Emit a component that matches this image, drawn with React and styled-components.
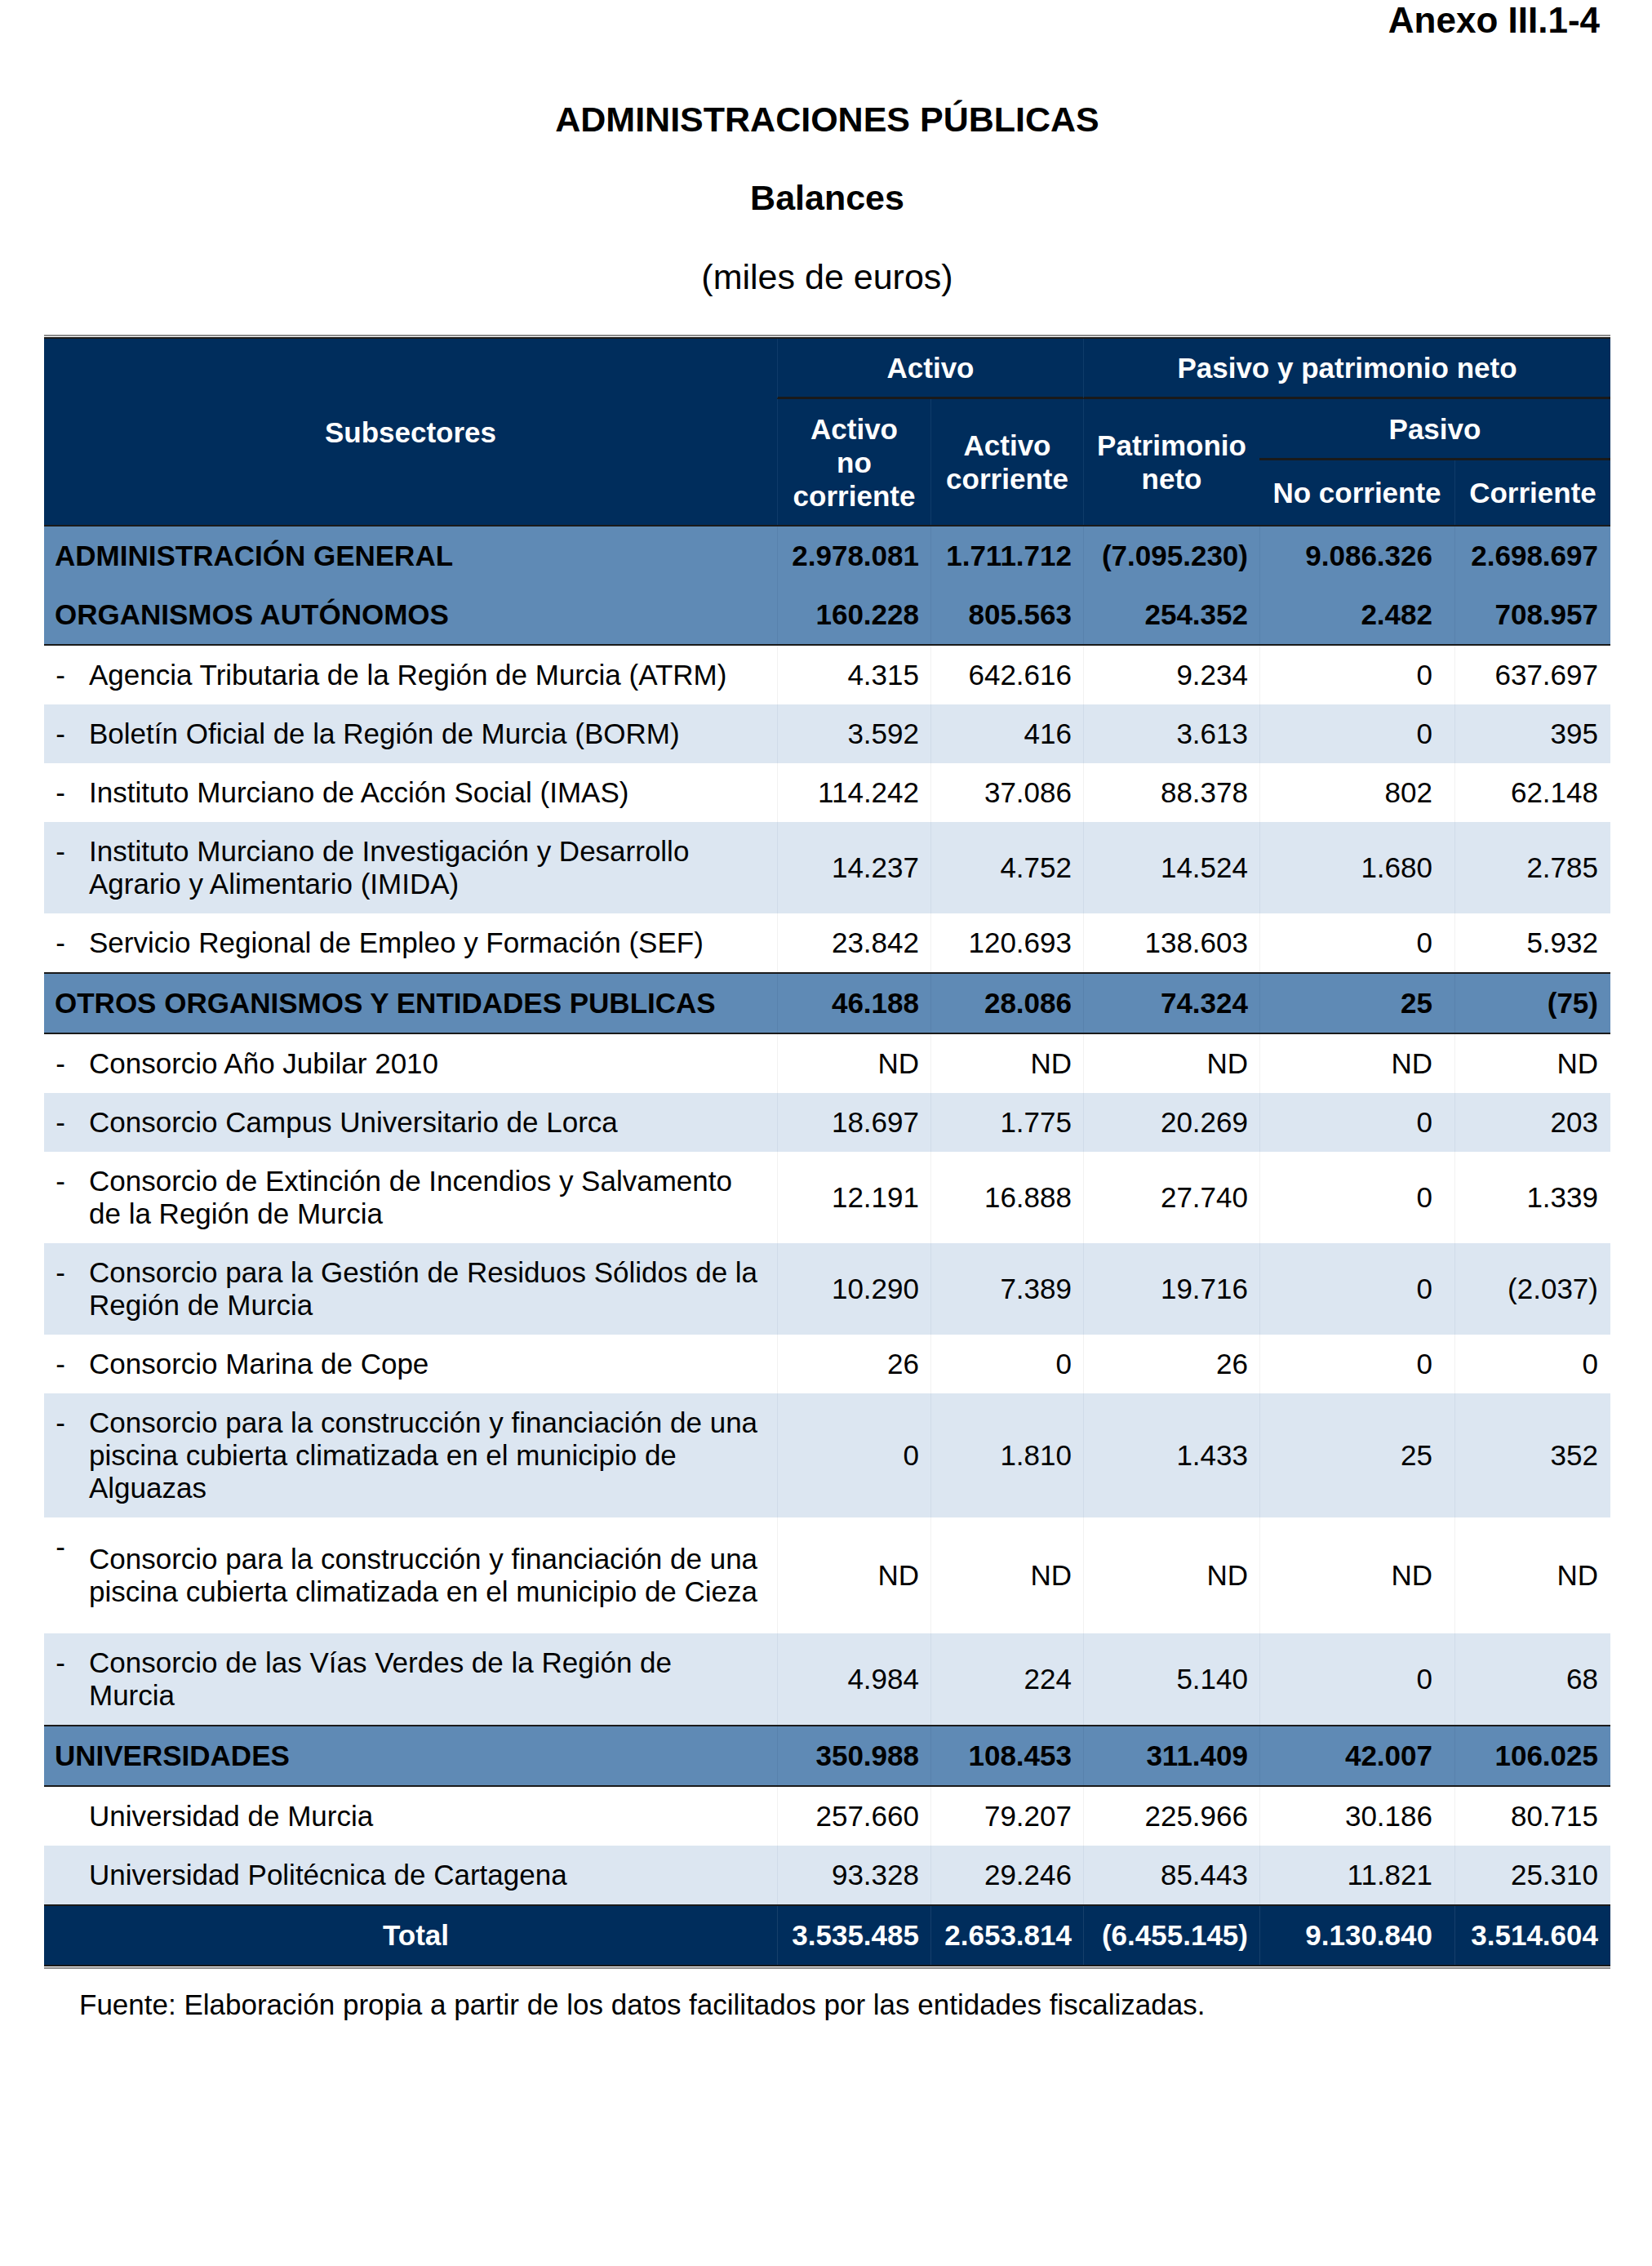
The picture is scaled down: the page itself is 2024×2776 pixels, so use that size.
import React from 'react';
import styled, { createGlobalStyle, css } from 'styled-components';

const GlobalStyle = createGlobalStyle`
  html, body {
    margin: 0;
    padding: 0;
    background: #fff;
  }
  body {
    font-family: "Liberation Sans", Arial, sans-serif;
    color: #000;
  }
`;

// Colores de la tabla
const NAVY = '#002d5c';
const STEEL = '#5f8ab5';
const LIGHT = '#dce6f1';
const RULE = '#1a1a1a';
const COLS = '898px 188px 187px 216px 239px 191px';

const Page = styled.div`
  width: 2024px;
  min-height: 2776px;
  box-sizing: border-box;
  padding: 0 51px 0 54px;
`;

const Annex = styled.div`
  margin-top: 3px;
  padding-right: 13px;
  text-align: right;
  font-size: 44px;
  line-height: 1;
  font-weight: bold;
`;

const Heading = styled.div`
  margin-top: ${p => p.gap}px;
  text-align: center;
  font-size: 43px;
  line-height: 1;
  font-weight: ${p => (p.light ? 'normal' : 'bold')};
`;

const DoubleRule = styled.div`
  height: 1px;
  border-top: 2px solid ${p => (p.flip ? RULE : '#8c8c8c')};
  border-bottom: 2px solid ${p => (p.flip ? '#8c8c8c' : RULE)};
  margin-top: ${p => p.gap || 0}px;
`;

const Head = styled.div`
  display: grid;
  grid-template-columns: ${COLS};
  grid-template-rows: 74px 75px 79px;
  background: ${NAVY};
  border-bottom: 2px solid ${RULE};
`;

const HeadCell = styled.div`
  grid-area: ${p => p.area};
  display: flex;
  align-items: center;
  justify-content: center;
  text-align: center;
  box-sizing: border-box;
  color: #fff;
  font-size: 35px;
  font-weight: bold;
  line-height: 41px;
  ${p => p.sep && css`border-left: 1px solid #0f3b69;`}
  ${p => p.under && css`border-bottom: 3px solid ${RULE};`}
`;

const rowBg = {
  white: '#fff',
  light: LIGHT,
  section: STEEL,
  total: NAVY,
};

const sepColor = {
  white: '#f2f2f2',
  light: '#d0dbe8',
  section: '#5882ad',
  total: '#163f6b',
};

const Row = styled.div`
  display: grid;
  grid-template-columns: ${COLS};
  min-height: ${p => p.minH || 0}px;
  background: ${p => rowBg[p.kind]};
  color: ${p => (p.kind === 'total' ? '#fff' : '#000')};
  font-weight: ${p => (p.kind === 'section' || p.kind === 'total' ? 'bold' : 'normal')};
  font-size: 35px;
  line-height: 40px;
  ${p => p.top && css`border-top: 2px solid ${RULE};`}
  ${p => p.bottom && css`border-bottom: 2px solid ${RULE};`}
`;

const NameCell = styled.div`
  display: flex;
  padding: 16px 0;
  justify-content: ${p => (p.center ? 'center' : 'flex-start')};
`;

const Dash = styled.span`
  flex: 0 0 40px;
  align-self: flex-start;
  text-align: center;
`;

const Label = styled.span`
  align-self: center;
  white-space: pre-line;
  padding-left: ${p => (p.bare ? 13 : 15)}px;
`;

const Num = styled.div`
  display: flex;
  align-items: center;
  justify-content: flex-end;
  padding: 16px ${p => p.pr}px 16px 0;
  border-left: 1px solid ${p => sepColor[p.kind]};
  white-space: nowrap;
`;

const Footer = styled.div`
  margin-top: 24px;
  padding-left: 43px;
  font-size: 35px;
  line-height: 40px;
`;

const PAD = [14, 14, 14, 27, 15];

const rows = [
  { kind: 'section', name: 'ADMINISTRACIÓN GENERAL', v: ['2.978.081', '1.711.712', '(7.095.230)', '9.086.326', '2.698.697'] },
  { kind: 'section', name: 'ORGANISMOS AUTÓNOMOS', bottom: true, v: ['160.228', '805.563', '254.352', '2.482', '708.957'] },
  { kind: 'white', dash: true, name: 'Agencia Tributaria de la Región de Murcia (ATRM)', v: ['4.315', '642.616', '9.234', '0', '637.697'] },
  { kind: 'light', dash: true, name: 'Boletín Oficial de la Región de Murcia (BORM)', v: ['3.592', '416', '3.613', '0', '395'] },
  { kind: 'white', dash: true, name: 'Instituto Murciano de Acción Social (IMAS)', v: ['114.242', '37.086', '88.378', '802', '62.148'] },
  { kind: 'light', dash: true, name: 'Instituto Murciano de Investigación y Desarrollo\nAgrario y Alimentario (IMIDA)', v: ['14.237', '4.752', '14.524', '1.680', '2.785'] },
  { kind: 'white', dash: true, name: 'Servicio Regional de Empleo y Formación (SEF)', v: ['23.842', '120.693', '138.603', '0', '5.932'] },
  { kind: 'section', name: 'OTROS ORGANISMOS Y ENTIDADES PUBLICAS', top: true, bottom: true, v: ['46.188', '28.086', '74.324', '25', '(75)'] },
  { kind: 'white', dash: true, name: 'Consorcio Año Jubilar 2010', v: ['ND', 'ND', 'ND', 'ND', 'ND'] },
  { kind: 'light', dash: true, name: 'Consorcio Campus Universitario de Lorca', v: ['18.697', '1.775', '20.269', '0', '203'] },
  { kind: 'white', dash: true, name: 'Consorcio de Extinción de Incendios y Salvamento\nde la Región de Murcia', v: ['12.191', '16.888', '27.740', '0', '1.339'] },
  { kind: 'light', dash: true, name: 'Consorcio para la Gestión de Residuos Sólidos de la\nRegión de Murcia', v: ['10.290', '7.389', '19.716', '0', '(2.037)'] },
  { kind: 'white', dash: true, name: 'Consorcio Marina de Cope', v: ['26', '0', '26', '0', '0'] },
  { kind: 'light', dash: true, name: 'Consorcio para la construcción y financiación de una\npiscina cubierta climatizada en el municipio de\nAlguazas', v: ['0', '1.810', '1.433', '25', '352'] },
  { kind: 'white', dash: true, minH: 142, name: 'Consorcio para la construcción y financiación de una\npiscina cubierta climatizada en el municipio de Cieza', v: ['ND', 'ND', 'ND', 'ND', 'ND'] },
  { kind: 'light', dash: true, name: 'Consorcio de las Vías Verdes de la Región de\nMurcia', v: ['4.984', '224', '5.140', '0', '68'] },
  { kind: 'section', name: 'UNIVERSIDADES', top: true, bottom: true, v: ['350.988', '108.453', '311.409', '42.007', '106.025'] },
  { kind: 'white', name: 'Universidad de Murcia', v: ['257.660', '79.207', '225.966', '30.186', '80.715'] },
  { kind: 'light', name: 'Universidad Politécnica de Cartagena', v: ['93.328', '29.246', '85.443', '11.821', '25.310'] },
];

const total = ['3.535.485', '2.653.814', '(6.455.145)', '9.130.840', '3.514.604'];

const DataRow = ({ row }) => (
  <Row kind={row.kind} top={row.top} bottom={row.bottom} minH={row.minH}>
    <NameCell>
      {row.kind !== 'section' && <Dash>{row.dash ? '-' : ''}</Dash>}
      <Label bare={row.kind === 'section'}>{row.name}</Label>
    </NameCell>
    {row.v.map((val, i) => (
      <Num key={i} kind={row.kind} pr={PAD[i]}>{val}</Num>
    ))}
  </Row>
);

export default function App() {
  return (
    <>
      <GlobalStyle />
      <Page>
        <Annex>Anexo III.1-4</Annex>
        <Heading gap={78}>ADMINISTRACIONES PÚBLICAS</Heading>
        <Heading gap={53}>Balances</Heading>
        <Heading gap={54} light>(miles de euros)</Heading>

        <DoubleRule gap={49} />
        <Head>
          <HeadCell area="1 / 1 / 4 / 2">Subsectores</HeadCell>
          <HeadCell area="1 / 2 / 2 / 4" sep under>Activo</HeadCell>
          <HeadCell area="1 / 4 / 2 / 7" sep under>Pasivo y patrimonio neto</HeadCell>
          <HeadCell area="2 / 2 / 4 / 3" sep>Activo<br />no<br />corriente</HeadCell>
          <HeadCell area="2 / 3 / 4 / 4" sep>Activo<br />corriente</HeadCell>
          <HeadCell area="2 / 4 / 4 / 5" sep>Patrimonio<br />neto</HeadCell>
          <HeadCell area="2 / 5 / 3 / 7" under>Pasivo</HeadCell>
          <HeadCell area="3 / 5 / 4 / 6">No corriente</HeadCell>
          <HeadCell area="3 / 6 / 4 / 7" sep>Corriente</HeadCell>
        </Head>

        {rows.map((row, i) => (
          <DataRow key={i} row={row} />
        ))}

        <Row kind="total" top>
          <NameCell center>
            <Label bare>Total</Label>
          </NameCell>
          {total.map((val, i) => (
            <Num key={i} kind="total" pr={PAD[i]}>{val}</Num>
          ))}
        </Row>
        <DoubleRule flip />

        <Footer>
          Fuente: Elaboración propia a partir de los datos facilitados por las entidades fiscalizadas.
        </Footer>
      </Page>
    </>
  );
}
